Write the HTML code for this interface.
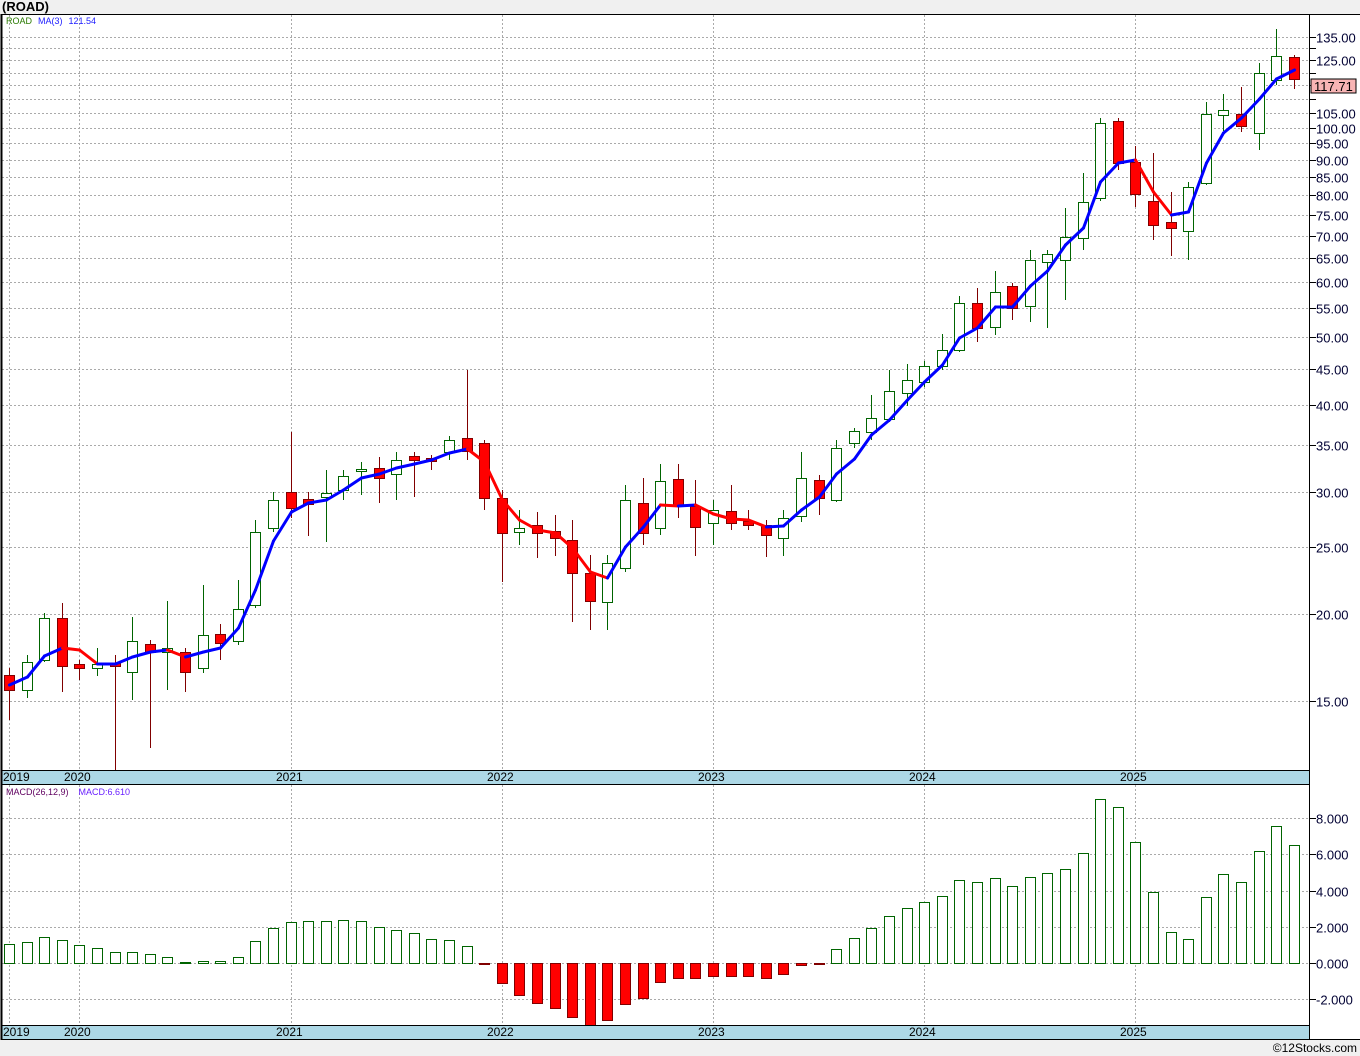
<!DOCTYPE html>
<html><head><meta charset="utf-8"><style>
html,body{margin:0;padding:0;background:#f0f0f0;width:1360px;height:1056px;overflow:hidden;font-family:"Liberation Sans",sans-serif}
</style></head><body>
<svg id="s" width="1360" height="1056" xmlns="http://www.w3.org/2000/svg" font-family="Liberation Sans, sans-serif">
<rect x="0" y="0" width="1360" height="1056" fill="#f0f0f0"/>
<rect x="1" y="14" width="1359" height="1026" fill="#fff"/>
<text x="2" y="11" font-size="13" font-weight="bold" fill="#000">(ROAD)</text>
<g id="grid"></g>
<g id="top"></g>
<g id="macd"></g>
<rect x="1" y="770" width="1308" height="14" fill="#add8e6"/>
<rect x="1" y="1025" width="1308" height="14" fill="#add8e6"/>
<g font-size="12" fill="#000">
<text x="3" y="781">2019</text><text x="64" y="781">2020</text><text x="276" y="781">2021</text><text x="487" y="781">2022</text><text x="698" y="781">2023</text><text x="909" y="781">2024</text><text x="1120" y="781">2025</text>
<text x="3" y="1036">2019</text><text x="64" y="1036">2020</text><text x="276" y="1036">2021</text><text x="487" y="1036">2022</text><text x="698" y="1036">2023</text><text x="909" y="1036">2024</text><text x="1120" y="1036">2025</text>
</g>
<line x1="1" y1="14.5" x2="1360" y2="14.5" stroke="#000"/>
<line x1="1" y1="770.5" x2="1309" y2="770.5" stroke="#000"/>
<line x1="1" y1="784.5" x2="1309" y2="784.5" stroke="#000"/>
<line x1="1" y1="1025.5" x2="1309" y2="1025.5" stroke="#000"/>
<line x1="1" y1="1039.5" x2="1360" y2="1039.5" stroke="#000"/>
<line x1="1.5" y1="14" x2="1.5" y2="1040" stroke="#000" stroke-width="2"/>
<line x1="1309.5" y1="14" x2="1309.5" y2="1040" stroke="#000"/>
<g id="axis" font-size="13" fill="#000033"></g>
<rect x="1311" y="79" width="45" height="14" fill="#f8b4b4" stroke="#000"/>
<text x="1314" y="91" font-size="13" fill="#000">117.71</text>
<text x="6" y="24" font-size="9"><tspan fill="#2a7a00">ROAD</tspan><tspan fill="#2020ff" dx="6">MA(3)</tspan><tspan fill="#2020ff" dx="6">121.54</tspan></text>
<text x="6" y="795" font-size="9"><tspan fill="#600060">MACD(26,12,9)</tspan><tspan fill="#6a20ff" dx="10">MACD:6.610</tspan></text>
<text x="1357" y="1052" font-size="12" fill="#000" text-anchor="end">©12Stocks.com</text>
</svg>
<script>
var NS="http://www.w3.org/2000/svg";
function el(p,t,a){var e=document.createElementNS(NS,t);for(var k in a)e.setAttribute(k,a[k]);document.getElementById(p).appendChild(e);return e;}
function Y(p){return 1519.4-302.2*Math.log(p);}
var dash={stroke:"#aaa","stroke-dasharray":"2,2","stroke-width":1};
[135,130,125,120,115,110,105,100,95,90,85,80,75,70,65,60,55,50,45,40,35,30,25,20,15].forEach(function(p){
 var y=Math.round(Y(p))+0.5;
 el("grid","line",Object.assign({x1:2,x2:1309,y1:y,y2:y},dash));
 el("axis","line",{x1:1309,x2:1316,y1:y,y2:y,stroke:"#000"});
 if([130,120,115,110].indexOf(p)<0){var t=el("axis","text",{x:1316,y:y+5});t.textContent=p.toFixed(2);}
});
[8,6,4,2,0,-2].forEach(function(v){
 var y=Math.round(963-18.1*v)+0.5;
 el("grid","line",Object.assign({x1:2,x2:1309,y1:y,y2:y},dash));
 el("axis","line",{x1:1309,x2:1316,y1:y,y2:y,stroke:"#000"});
 var t=el("axis","text",{x:1316,y:y+5});t.textContent=v.toFixed(3);
});
[9,79,291,502,713,924,1135].forEach(function(x){
 el("grid","line",Object.assign({x1:x+.5,x2:x+.5,y1:15,y2:770},dash));
 el("grid","line",Object.assign({x1:x+.5,x2:x+.5,y1:785,y2:1025},dash));
});
var C=[[675,690,668,720,1],[662,690,655,698,0],[618,660,613,662,0],[618,666,603,692,1],[664,668,660,680,1],[664,668,648,676,0],[663,666,655,770,1],[641,672,617,700,0],[644,652,640,748,1],[648,652,601,690,0],[652,672,648,692,1],[635,668,585,673,0],[634,643,624,660,1],[609,641,580,645,0],[532,605,520,608,0],[500,528,492,532,0],[492,508,432,518,1],[499,504,492,536,1],[493,497,470,542,0],[476,490,470,500,0],[469,471,462,495,0],[468,478,457,503,1],[460,474,452,500,0],[456,460,452,497,1],[458,461,455,470,1],[440,452,436,460,0],[438,451,370,460,1],[443,498,440,510,1],[498,533,490,582,1],[528,532,510,545,0],[525,533,512,558,1],[531,538,515,556,1],[540,573,520,622,1],[573,601,555,630,1],[563,602,555,630,0],[500,568,485,572,0],[503,533,478,545,1],[481,528,464,535,0],[479,506,464,518,1],[506,527,480,556,1],[510,523,500,545,0],[511,523,485,530,1],[521,525,510,530,1],[525,535,520,557,1],[518,538,510,556,0],[478,516,452,522,0],[480,498,475,515,1],[448,500,440,502,0],[431,443,428,448,0],[418,432,395,440,0],[391,419,370,422,0],[380,393,364,406,0],[366,382,361,387,0],[350,366,334,370,0],[303,350,296,352,0],[303,328,288,342,1],[292,327,271,335,0],[286,308,283,320,1],[260,306,250,322,0],[254,262,250,328,0],[237,260,208,300,0],[202,238,173,250,0],[123,198,118,201,0],[121,163,118,170,1],[162,194,146,207,1],[201,225,153,240,1],[222,228,192,256,1],[187,231,182,260,0],[114,183,102,185,0],[110,115,94,131,0],[114,126,87,132,1],[73,133,63,150,0],[56,80,29,85,0],[57,79,55,89,1]];
var MA=[685,677,656,648,650,664,664,657,652,650,657,652,648,628,590,541,512,503,500,490,478,474,468,464,460,453,449,462,500,520,530,533,548,572,578,547,527,505,506,505,514,519,520,527,526,510,497,474,459,435,420,400,382,365,338,328,307,307,286,271,245,228,182,163,160,192,215,212,163,133,118,99,79,70];
var M=[944,942,937,940,945,948,952,952,954,957,962,961,961,957,941,928,922,921,921,920,921,927,930,933,939,940,946,964,983,995,1003,1008,1017,1025,1020,1004,998,982,978,978,976,976,976,978,974,965,964,949,938,928,916,908,902,896,880,882,878,886,877,873,869,853,799,807,842,892,932,939,897,874,882,851,826,845];
function X(i){return Math.round(9+17.6*i);}
C.forEach(function(c,i){
 var x=X(i),red=c[4];
 el("top","line",{x1:x+.5,x2:x+.5,y1:c[2],y2:c[3],stroke:red?"#800000":"#006400"});
 el("top","rect",{x:x-5+.5,y:c[0]+.5,width:10,height:Math.max(1,c[1]-c[0]),fill:red?"#f00":"#fff",stroke:red?"#800000":"#006400"});
});
for(var i=1;i<MA.length;i++){
 var up=MA[i]<=MA[i-1];
 el("top","line",{x1:X(i-1)+.5,y1:MA[i-1],x2:X(i)+.5,y2:MA[i],stroke:up?"#0000ff":"#ff0000","stroke-width":3,"stroke-linecap":"round"});
}
M.forEach(function(m,i){
 var x=X(i),pos=m<963;
 var y=pos?m:963,h=Math.max(1,Math.abs(m-963));
 el("macd","rect",{x:x-5+.5,y:y+.5,width:10,height:h,fill:pos?"#fff":"#f00",stroke:pos?"#006400":"#800000"});
});
</script>
</body></html>
